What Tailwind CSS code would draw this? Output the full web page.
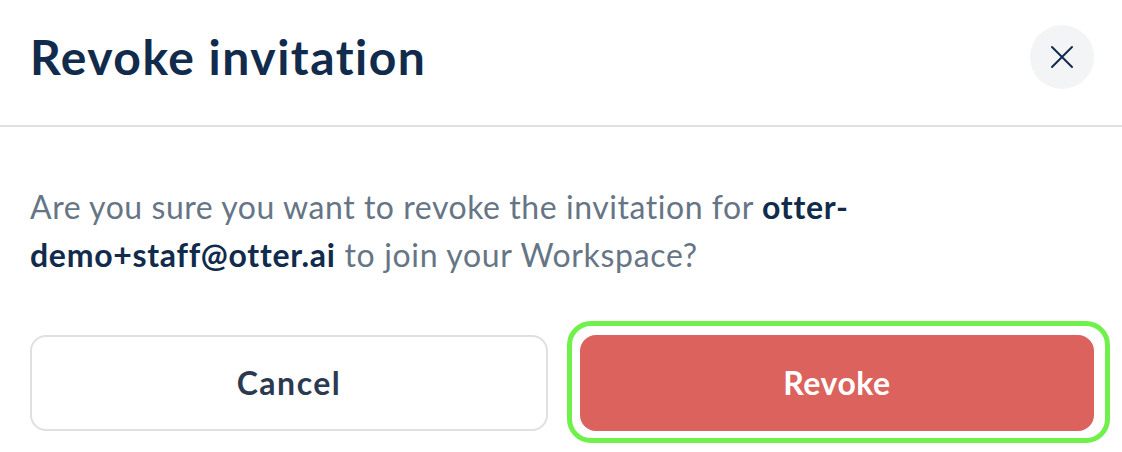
<!DOCTYPE html>
<html>
<head>
<meta charset="utf-8">
<script src="https://cdn.jsdelivr.net/npm/@tailwindcss/browser@4"></script>
</head>
<body class="bg-white">
<div class="w-[1122px] h-[452px] overflow-hidden flex flex-col font-['Lato','Liberation_Sans',sans-serif]">
  <div class="shrink-0 border-b-2 border-[#dfdfe4] flex items-center justify-between pl-[30px] pr-[28px] pt-[25px] pb-[36px]">
    <h1 class="text-[48px] leading-[64px] font-bold text-[#112b4c] tracking-[1.5px]">Revoke invitation</h1>
    <button class="w-[64px] h-[64px] rounded-full bg-[#f3f4f6] flex items-center justify-center">
      <svg width="24" height="24" viewBox="0 0 24 24" fill="none" stroke="#112b4c" stroke-width="2" stroke-linecap="round"><path d="M2 2 22 22M22 2 2 22"/></svg>
    </button>
  </div>
  <div class="pl-[30px] pr-[28px] pt-[56px]">
    <p class="w-[860px] text-[32px] leading-[48px] text-[#667585] tracking-[0.55px]">Are you sure you want to revoke the invitation for <b class="text-[#112b4c] font-bold tracking-[0.7px]">otter-<br>demo+staff@otter.ai</b> <span class="tracking-[0.68px]">to join your Workspace?</span></p>
    <div class="flex items-center gap-[32px] mt-[56px]">
      <button class="w-[518px] h-[96px] shrink-0 rounded-[16px] border-2 border-[#dfdfe4] bg-white text-[32px] font-bold text-[#2b3a50] tracking-[1.5px]">Cancel</button>
      <button class="relative w-[514px] h-[96px] shrink-0 rounded-[16px] bg-[#dc625e] text-[32px] font-bold text-white tracking-[0.5px]">
        Revoke
        <span class="absolute top-[-14px] left-[-13px] w-[543px] h-[122px] rounded-[24px] border-[5px] border-[#6ff04a]"></span>
      </button>
    </div>
  </div>
</div>
</body>
</html>
